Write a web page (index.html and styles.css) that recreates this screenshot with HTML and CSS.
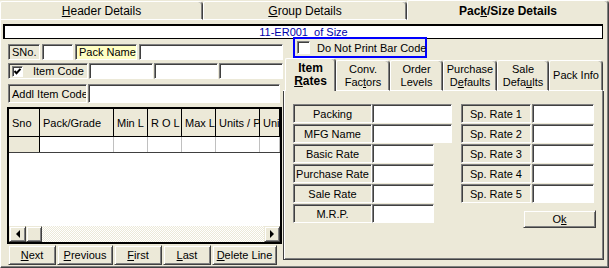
FILE: index.html
```html
<!DOCTYPE html>
<html lang="en">
<head>
    <meta charset="UTF-8">
    <title>Pack/Size Details</title>
    <link rel="stylesheet" href="styles.css">
</head>
<body>
<div class="window">
    <div class="main-tabs">
        <div class="main-tab tab-header"><span><u>H</u>eader Details</span></div>
        <div class="main-tab tab-group"><span><u>G</u>roup Details</span></div>
        <div class="main-tab tab-pack active"><span>Pac<u>k</u>/Size Details</span></div>
    </div>

    <div class="panel">
        <div class="title-bar">11-ER001  of Size</div>

        <div class="content">
            <!-- left side: pack entry + grid -->
            <div class="left">
                <div class="row row-1">
                    <div class="box lbl w-sno">SNo.</div>
                    <div class="box field w-sno-in"></div>
                    <div class="box lbl lbl-yellow w-pname">Pack Name</div>
                    <div class="box field w-pname-in"></div>
                </div>
                <div class="row row-2">
                    <div class="box lbl w-icode">
                        <span class="check checked">
                            <svg width="9" height="9" viewBox="0 0 9 9"><polyline points="1.5,4 3.5,6.2 7.5,1.8" fill="none" stroke="#000" stroke-width="2"/></svg>
                        </span>
                        <span>Item Code</span>
                    </div>
                    <div class="box field w-code"></div>
                    <div class="box field w-code"></div>
                    <div class="box field w-code"></div>
                </div>
                <div class="row row-3">
                    <div class="box lbl w-addl">Addl Item Code</div>
                    <div class="box field w-addl-in"></div>
                </div>

                <div class="grid">
                    <div class="grid-head">
                        <div><span>Sno</span></div>
                        <div><span>Pack/Grade</span></div>
                        <div><span>Min L</span></div>
                        <div><span>R O L</span></div>
                        <div><span>Max L</span></div>
                        <div><span>Units / P</span></div>
                        <div><span>Uni</span></div>
                    </div>
                    <div class="grid-row">
                        <div class="sno-cell"></div>
                        <div></div>
                        <div></div>
                        <div></div>
                        <div></div>
                        <div></div>
                        <div></div>
                    </div>
                    <div class="grid-fill"></div>
                    <div class="hscroll">
                        <div class="raised sb-btn"><span class="arrow arrow-left"></span></div>
                        <div class="raised sb-thumb"></div>
                        <div class="sb-track"></div>
                        <div class="raised sb-btn sb-right"><span class="arrow arrow-right"></span></div>
                    </div>
                </div>

                <div class="nav">
                    <div class="raised btn btn-next"><span><u>N</u>ext</span></div>
                    <div class="raised btn btn-prev"><span><u>P</u>revious</span></div>
                    <div class="raised btn btn-first"><span><u>F</u>irst</span></div>
                    <div class="raised btn btn-last"><span><u>L</u>ast</span></div>
                    <div class="raised btn btn-del"><span><u>D</u>elete Line</span></div>
                </div>
            </div>

            <!-- right side: barcode option + tab control -->
            <div class="right">
                <div class="barcode">
                    <span class="check big"></span>
                    <span>Do Not Print Bar Code</span>
                </div>

                <div class="sub-tabs">
                    <div class="sub-tab active t1"><span>Item<br><u>R</u>ates</span></div>
                    <div class="sub-tab t2"><span>Conv.<br>Fac<u>t</u>ors</span></div>
                    <div class="sub-tab t3"><span>Order<br>Levels</span></div>
                    <div class="sub-tab t4"><span>Purchase<br>D<u>e</u>faults</span></div>
                    <div class="sub-tab t5"><span>Sale<br>Defa<u>u</u>lts</span></div>
                    <div class="sub-tab t6"><span>Pack Info</span></div>
                </div>

                <div class="pane">
                    <div class="rates">
                        <div class="rate-col col-main">
                            <div class="rate-row"><div class="box lbl rate-lbl">Packing</div><div class="box field in-wide"></div></div>
                            <div class="rate-row"><div class="box lbl rate-lbl">MFG Name</div><div class="box field in-wide"></div></div>
                            <div class="rate-row"><div class="box lbl rate-lbl">Basic Rate</div><div class="box field in-narrow"></div></div>
                            <div class="rate-row"><div class="box lbl rate-lbl">Purchase Rate</div><div class="box field in-narrow"></div></div>
                            <div class="rate-row"><div class="box lbl rate-lbl">Sale Rate</div><div class="box field in-narrow"></div></div>
                            <div class="rate-row"><div class="box lbl rate-lbl">M.R.P.</div><div class="box field in-narrow"></div></div>
                        </div>
                        <div class="rate-col col-sp">
                            <div class="rate-row"><div class="box lbl sp-lbl">Sp. Rate 1</div><div class="box field in-narrow"></div></div>
                            <div class="rate-row"><div class="box lbl sp-lbl">Sp. Rate 2</div><div class="box field in-narrow"></div></div>
                            <div class="rate-row"><div class="box lbl sp-lbl">Sp. Rate 3</div><div class="box field in-narrow"></div></div>
                            <div class="rate-row"><div class="box lbl sp-lbl">Sp. Rate 4</div><div class="box field in-narrow"></div></div>
                            <div class="rate-row"><div class="box lbl sp-lbl">Sp. Rate 5</div><div class="box field in-narrow"></div></div>
                            <div class="raised btn btn-ok"><span>O<u>k</u></span></div>
                        </div>
                    </div>
                </div>
            </div>
        </div>
    </div>
</div>
</body>
</html>
```

FILE: styles.css
```css
* { box-sizing: border-box; }
body { margin: 0; background-color: #ece9d8; font: 11px "Liberation Sans", Arial, sans-serif; color: #000; }
.window { width: 609px; height: 268px; overflow: hidden; }

/* top level tabs */
.main-tabs { display: flex; height: 20px; }
.main-tab { margin-top: 1px; height: 19px; border: 1px solid; border-color: #fff #404040 #fff #fff; border-radius: 2px 4px 0 0; box-shadow: inset -1px 0 #808080; display: flex; align-items: center; justify-content: center; font-size: 12px; }
.main-tab.active { margin-top: 0; height: 20px; border-bottom: 0; font-weight: bold; }
.tab-header { width: 203px; }
.tab-group { width: 204px; }
.tab-pack { width: 202px; }

.panel { height: 248px; border: 1px solid; border-top: 0; border-color: #fff #404040 #404040 #fff; box-shadow: inset -1px -1px #808080; padding-top: 4px; }
.title-bar { margin: 0 5px 0 2px; height: 15px; line-height: 12px; border: 1px solid #000; border-top-width: 2px; border-left-width: 2px; background-color: #fff; color: #0000aa; text-align: center; white-space: pre; }

.content { display: flex; }
.left { width: 275px; margin-left: 7px; }
.right { width: 321px; }

/* 3d boxes */
.box { border: 1px solid; border-color: #808080 #fff #fff #808080; box-shadow: inset 1px 1px #404040; display: flex; align-items: center; white-space: nowrap; overflow: hidden; }
.lbl { padding-left: 3px; }
.lbl-yellow { background-color: #ffffc4; }
.field { background-color: #fff; }
.raised { border: 1px solid; border-color: #ece9d8 #404040 #404040 #ece9d8; box-shadow: inset 1px 1px #fff, inset -1px -1px #808080; background-color: #ece9d8; }

.row { display: flex; }
.row-1 { margin-top: 5px; height: 16px; gap: 2px; }
.row-2 { margin-top: 3px; height: 16px; gap: 1px; }
.row-3 { margin-top: 5px; height: 19px; gap: 1px; }
.w-sno { width: 32px; }
.w-sno-in { width: 31px; }
.w-pname { width: 62px; }
.w-pname-in { width: 144px; }
.w-icode { width: 80px; gap: 10px; }
.w-code { width: 64px; }
.w-addl { width: 79px; }
.w-addl-in { width: 192px; }

.check { width: 11px; height: 11px; border: 1px solid; border-color: #808080 #fff #fff #808080; box-shadow: inset 1px 1px #404040; background-color: #fff; display: flex; align-items: center; justify-content: center; flex-shrink: 0; }
.check svg { display: block; }
.check.big { width: 13px; height: 13px; }

/* grid */
.grid { margin: 4px 0 0 -1px; width: 275px; height: 137px; border: 2px solid #000; background-color: #fff; display: flex; flex-direction: column; }
.grid-head, .grid-row { display: grid; grid-template-columns: 31px 74px 34px 34px 34px 44px 1fr; }
.grid-head { height: 28px; border-bottom: 1px solid #000; background-color: #ece9d8; }
.grid-head div { border-right: 1px solid #000; padding-left: 3px; display: flex; align-items: center; white-space: nowrap; overflow: hidden; }
.grid-row { height: 16px; border-bottom: 1px solid #404040; }
.grid-row div { border-right: 1px solid #c0c0c0; }
.grid-row .sno-cell { background-color: #ece9d8; border-right-color: #000; }
.grid-fill { flex: 1; }
.hscroll { height: 16px; display: flex; background: repeating-conic-gradient(#fff 0 25%, #ece9d8 0 50%) 0 0 / 2px 2px; }
.sb-btn { width: 17px; display: flex; align-items: center; justify-content: center; }
.sb-right { width: 16px; }
.sb-thumb { width: 16px; }
.sb-track { flex: 1; }
.arrow { width: 0; height: 0; border-top: 4px solid transparent; border-bottom: 4px solid transparent; }
.arrow-left { border-right: 4px solid #000; }
.arrow-right { border-left: 4px solid #000; }

.nav { display: flex; gap: 1px; margin-top: 1px; }
.btn { height: 20px; display: flex; align-items: center; justify-content: center; white-space: nowrap; }
.btn-next { width: 48px; }
.btn-prev { width: 56px; }
.btn-first { width: 48px; }
.btn-last { width: 48px; }
.btn-del { width: 65px; }

/* right side */
.barcode { margin: -2px 0 0 10px; width: 134px; height: 21px; border: 2px solid #0000ff; display: flex; align-items: center; gap: 7px; padding-left: 2px; white-space: nowrap; }

.sub-tabs { display: flex; height: 33px; }
.sub-tabs::before { content: ""; width: 2px; border-bottom: 1px solid #fff; }
.sub-tabs::after { content: ""; flex: 1; border-bottom: 1px solid #fff; }
.sub-tab { margin-top: 2px; height: 31px; border: 1px solid; border-color: #fff #404040 #fff #fff; border-radius: 2px 4px 0 0; box-shadow: inset -1px 0 #808080; display: flex; align-items: center; justify-content: center; text-align: center; line-height: 13px; white-space: nowrap; }
.sub-tab.active { margin-top: 0; height: 33px; border-bottom: 0; font-weight: bold; font-size: 12px; }
.t1 { width: 51px; }
.t2 { width: 54px; }
.t3 { width: 53px; }
.t4 { width: 54px; }
.t5 { width: 52px; }
.t6 { width: 54px; }

.pane { height: 169px; border: 1px solid; border-top: 0; border-color: #fff #404040 #404040 #404040; box-shadow: inset 1px 0 #fff, inset -1px -1px #808080; padding: 13px 0 0 9px; }
.rates { display: flex; gap: 9px; }
.col-main { width: 159px; }
.col-sp { width: 135px; display: flex; flex-direction: column; }
.rate-row { display: flex; height: 19px; margin-bottom: 1px; }
.col-sp .rate-row { gap: 1px; }
.rate-lbl { width: 79px; justify-content: center; padding-left: 0; }
.sp-lbl { width: 70px; justify-content: center; padding-left: 0; }
.in-wide { width: 80px; }
.in-narrow { width: 62px; }
.btn-ok { width: 73px; height: 18px; margin: 6px 0 0 auto; }
```
